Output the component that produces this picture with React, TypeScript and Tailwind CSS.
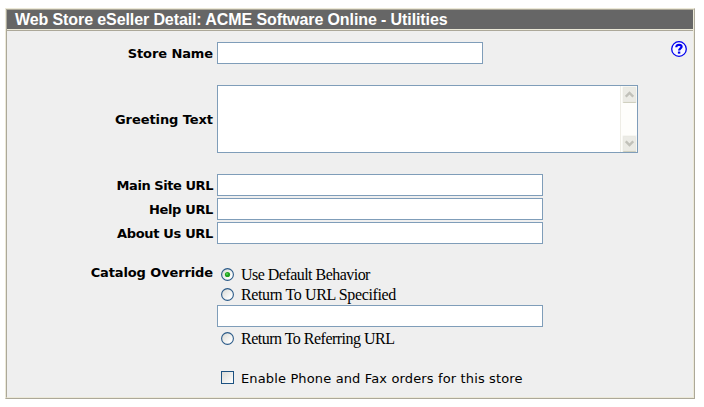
import type { ReactNode } from 'react';

function Row({
  label,
  className,
  tracking = '',
  children,
}: {
  label: string;
  className: string;
  tracking?: string;
  children: ReactNode;
}) {
  return (
    <div className={`flex ${className}`}>
      <label
        className={`w-[206px] shrink-0 pt-px text-right font-['Verdana','DejaVu_Sans',sans-serif] text-[13px] leading-[22px] font-bold whitespace-nowrap ${tracking}`}
      >
        {label}
      </label>
      <div className="ml-1">{children}</div>
    </div>
  );
}

function TextBox({ className }: { className: string }) {
  return <input type="text" className={`block h-[22px] border border-[#7f9db9] bg-white outline-none ${className}`} />;
}

function Radio({ checked = false }: { checked?: boolean }) {
  return (
    <svg width="13" height="13" viewBox="0 0 13 13" className="mt-1 shrink-0">
      <defs>
        <linearGradient id="radioFill" x1="0" y1="0" x2="1" y2="1">
          <stop offset="0.1" stopColor="#dcdcd7" />
          <stop offset="0.8" stopColor="#ffffff" />
        </linearGradient>
      </defs>
      <circle cx="6.5" cy="6.5" r="5.9" fill="url(#radioFill)" stroke="#2b5a88" strokeWidth="1.1" />
      {checked && <circle cx="6.5" cy="6.5" r="2.6" fill="#21a121" />}
      {checked && <circle cx="6" cy="6" r="1" fill="#55d551" />}
    </svg>
  );
}

function Option({ text, tracking, checked }: { text: string; tracking: string; checked?: boolean }) {
  return (
    <label className="flex h-5 items-start pl-1">
      <Radio checked={checked} />
      <span className={`mt-px ml-[7px] font-['Liberation_Serif',serif] text-[16px] leading-5 whitespace-nowrap ${tracking}`}>
        {text}
      </span>
    </label>
  );
}

function ScrollButton({ down = false }: { down?: boolean }) {
  return (
    <div className="flex h-[17px] w-[15px] shrink-0 items-center justify-center rounded-[2px] border border-[#f7f7f2] border-b-[#d0d0bf] bg-[#ebebe5] shadow-[inset_0_0_0_1px_#e9e9e2]">
      <svg width="9" height="7" viewBox="0 0 9 7" className="shrink-0" fill="none" stroke="#c1c1b9" strokeWidth="2.4">
        <path d={down ? 'M0.8 1.3L4.5 5L8.2 1.3' : 'M0.8 5.7L4.5 2L8.2 5.7'} />
      </svg>
    </div>
  );
}

export default function App() {
  return (
    <div className="h-[407px] w-[704px] bg-white pt-2 pl-[5px] text-black">
      <div className="h-[391px] w-[690px] border border-t-[#ece9d8] border-r-[#aca899] border-b-[#aca899] border-l-[#ece9d8]">
        <div className="flex h-[389px] flex-col border border-t-[#aca899] border-r-[#ece9d8] border-b-[#ece9d8] border-l-[#aca899] bg-[#efefef]">
          <h1 className="h-[19px] shrink-0 bg-[#666666] pl-2 font-['Liberation_Sans',sans-serif] text-[16px] leading-[19px] font-bold tracking-[-0.1px] whitespace-nowrap text-white">
            Web Store eSeller Detail: ACME Software Online - Utilities
          </h1>
          <div className="h-0.5 shrink-0 border-t border-b border-t-[#ece9d8] border-b-[#aca899]" />
          <div className="flex items-start justify-between pt-[10px] pr-[6px]">
            <Row label="Store Name" className="pt-px" tracking="tracking-[-0.1px]">
              <TextBox className="w-[266px]" />
            </Row>
            <svg width="16" height="16" viewBox="0 0 16 16" fill="none" stroke="#0000ee">
              <circle cx="8" cy="8" r="7.3" strokeWidth="1.3" fill="#f8f8ff" />
              <path d="M5.3 6.2C5.3 4.4 6.4 3.8 8 3.8C9.6 3.8 10.6 4.6 10.6 5.8C10.6 7.4 8.1 7.5 8.1 9.6" strokeWidth="2.2" />
              <path d="M6.9 11.6H9.3" strokeWidth="2.1" />
            </svg>
          </div>
          <Row label="Greeting Text" className="mt-[20px] items-center" tracking="tracking-[-0.08px]">
            <div className="flex h-[68px] w-[421px] border border-[#7f9db9] bg-white">
              <textarea className="min-w-0 flex-1 resize-none outline-none" />
              <div className="flex w-[17px] flex-col items-center justify-between border-l border-[#eeede5] bg-[#fefefb]">
                <ScrollButton />
                <ScrollButton down />
              </div>
            </div>
          </Row>
          <Row label="Main Site URL" className="mt-[21px]" tracking="tracking-[-0.44px]">
            <TextBox className="w-[326px]" />
          </Row>
          <Row label="Help URL" className="mt-px" tracking="tracking-[-0.36px]">
            <TextBox className="w-[326px]" />
          </Row>
          <Row label="About Us URL" className="mt-px" tracking="tracking-[-0.33px]">
            <TextBox className="w-[326px]" />
          </Row>
          <Row label="Catalog Override" className="mt-[16px]" tracking="tracking-[-0.12px]">
            <div className="pt-[3px]">
              <Option text="Use Default Behavior" tracking="tracking-[-0.53px]" checked />
              <Option text="Return To URL Specified" tracking="tracking-[-0.39px]" />
              <TextBox className="mt-px w-[326px]" />
              <div className="mt-px">
                <Option text="Return To Referring URL" tracking="tracking-[-0.51px]" />
              </div>
            </div>
          </Row>
          <label className="mt-[20px] ml-[214px] flex h-5 items-start">
            <span className="mt-[3px] h-[13px] w-[13px] shrink-0 border border-[#1d5281] bg-gradient-to-br from-[#dcdcd7] to-white" />
            <span className="ml-[7px] font-['Verdana','DejaVu_Sans',sans-serif] text-[13px] leading-[21px] tracking-[0.14px] whitespace-nowrap">
              Enable Phone and Fax orders for this store
            </span>
          </label>
        </div>
      </div>
    </div>
  );
}
